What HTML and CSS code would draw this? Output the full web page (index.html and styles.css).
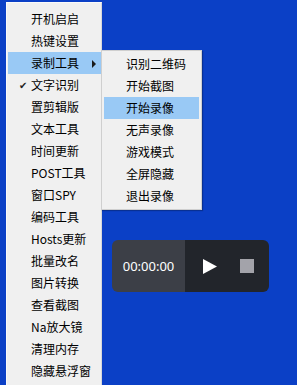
FILE: index.html
```html
<!DOCTYPE html>
<html lang="zh">
<head>
<meta charset="utf-8">
<link rel="stylesheet" href="styles.css">
</head>
<body>
<div class="desktop">
  <ul class="menu main-menu">
    <li class="item">开机启启</li>
    <li class="item">热键设置</li>
    <li class="item active has-sub">录制工具<span class="arrow"></span></li>
    <li class="item checked"><span class="check">✔</span>文字识别</li>
    <li class="item">置剪辑版</li>
    <li class="item">文本工具</li>
    <li class="item">时间更新</li>
    <li class="item">POST工具</li>
    <li class="item">窗口SPY</li>
    <li class="item">编码工具</li>
    <li class="item">Hosts更新</li>
    <li class="item">批量改名</li>
    <li class="item">图片转换</li>
    <li class="item">查看截图</li>
    <li class="item">Na放大镜</li>
    <li class="item">清理内存</li>
    <li class="item">隐藏悬浮窗</li>
  </ul>
  <ul class="menu sub-menu">
    <li class="item">识别二维码</li>
    <li class="item">开始截图</li>
    <li class="item active">开始录像</li>
    <li class="item">无声录像</li>
    <li class="item">游戏模式</li>
    <li class="item">全屏隐藏</li>
    <li class="item">退出录像</li>
  </ul>
  <div class="recorder">
    <div class="timer">00:00:00</div>
    <div class="controls">
      <svg class="play" width="14" height="15" viewBox="0 0 14 15"><path d="M0 0 L14 7.5 L0 15 Z" fill="#fff"/></svg>
      <span class="stop"></span>
    </div>
  </div>
</div>
</body>
</html>
```
FILE: styles.css
```css
html, body {
  margin: 0;
  padding: 0;
}
body {
  width: 297px;
  height: 385px;
  overflow: hidden;
  background: #0b40c6;
  font-family: "Noto Sans CJK SC", "Microsoft YaHei", sans-serif;
  font-size: 12px;
  color: #000;
}
.desktop {
  position: relative;
  width: 297px;
  height: 385px;
}
.menu {
  list-style: none;
  margin: 0;
  background: #f0f0f0;
  box-sizing: border-box;
}
.item {
  height: 22px;
  line-height: 22px;
  position: relative;
  white-space: nowrap;
}
.main-menu {
  position: absolute;
  left: 6px;
  top: 2px;
  width: 96px;
  height: 400px;
  padding: 5px 0 0 1px;
  border: 1px solid #fafafa;
  border-right-color: #d8d8d8;
}
.main-menu .item {
  padding-left: 23px;
}
.main-menu .item.active {
  background: #99c9f5;
  margin-right: -4px;
}
.check {
  position: absolute;
  left: 11px;
  top: 0;
  font-size: 10px;
  color: #222;
}
.arrow {
  position: absolute;
  left: 84px;
  top: 8px;
  width: 0;
  height: 0;
  border-top: 4px solid transparent;
  border-bottom: 4px solid transparent;
  border-left: 4px solid #1a1a1a;
}
.sub-menu {
  position: absolute;
  left: 101px;
  top: 50px;
  width: 101px;
  padding: 2px 2px 2px 2px;
  border: 1px solid #cfcfcf;
  box-shadow: 1px 1px 1px rgba(0, 0, 0, 0.25);
}
.sub-menu .item {
  padding-left: 22px;
}
.sub-menu .item.active {
  background: #99c9f5;
}
.recorder {
  position: absolute;
  left: 112px;
  top: 240px;
  width: 157px;
  height: 52px;
  display: flex;
  border-radius: 6px;
  overflow: hidden;
}
.timer {
  width: 73px;
  background: #3c3f47;
  color: #fff;
  font-family: "Noto Sans", "Open Sans", sans-serif;
  font-size: 13px;
  display: flex;
  align-items: center;
  justify-content: center;
}
.controls {
  flex: 1;
  background: #22252b;
  display: flex;
  align-items: center;
  padding-left: 18px;
  gap: 23px;
}
.stop {
  width: 14px;
  height: 14px;
  background: #a3a3aa;
  display: block;
}
```
